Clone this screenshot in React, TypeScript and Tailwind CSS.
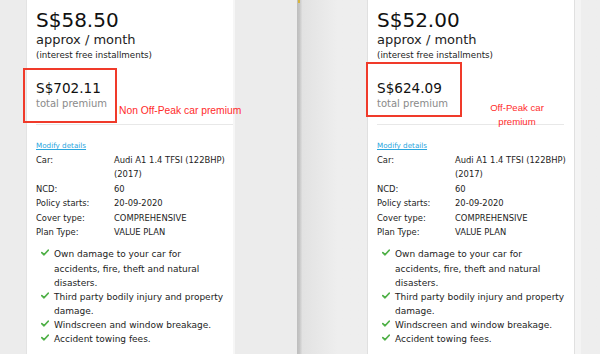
import React from 'react';

interface Quote {
  monthly: string;
  total: string;
  lineRight: string;
}

const details: [string, string][] = [
  ['Car:', 'Audi A1 1.4 TFSI (122BHP) (2017)'],
  ['NCD:', '60'],
  ['Policy starts:', '20-09-2020'],
  ['Cover type:', 'COMPREHENSIVE'],
  ['Plan Type:', 'VALUE PLAN'],
];

const benefits = [
  'Own damage to your car for accidents, fire, theft and natural disasters.',
  'Third party bodily injury and property damage.',
  'Windscreen and window breakage.',
  'Accident towing fees.',
];

function Check() {
  return (
    <svg className="w-[8px] h-[7px] mt-[2px] shrink-0" viewBox="0 0 10 8" fill="none">
      <path d="M1 4.2 L3.8 6.8 L9 1.2" stroke="#4fb047" strokeWidth={2.2} strokeLinecap="round" strokeLinejoin="round" />
    </svg>
  );
}

function QuoteCard({ quote }: { quote: Quote }) {
  return (
    <div className="h-full bg-white px-[9px] text-[#1c1c1c]">
      {/* Price */}
      <div className="pt-[8px] text-[20px] leading-[24px] text-[#111]">{quote.monthly}</div>
      <div className="text-[13px] leading-[16px]">approx / month</div>
      <div className="mt-[1px] text-[8.7px] leading-[12px]">(interest free installments)</div>

      <div className="mt-[19px] text-[13.6px] leading-[16px] text-[#111]">{quote.total}</div>
      <div className="mt-[1px] text-[10px] leading-[13px] text-[#8a8a8a]">total premium</div>

      <div className={`mt-[14px] border-t border-[#e8e8e8] ${quote.lineRight}`} />

      {/* Details */}
      <a className="block mt-[16px] text-[7.2px] leading-[10px] text-[#2ba6de] underline">Modify details</a>
      <div className="mt-[2px] text-[8.4px] leading-[14.4px]">
        {details.map(([label, value]) => (
          <div key={label} className="flex">
            <div className="w-[78px] shrink-0">{label}</div>
            <div className="w-[116px] shrink-0">{value}</div>
          </div>
        ))}
      </div>

      {/* Benefits */}
      <ul className="mt-[8px] pl-[5px] text-[9px] leading-[14.1px]">
        {benefits.map((b) => (
          <li key={b} className="flex gap-[5px]">
            <Check />
            <span className="w-[170px]">{b}</span>
          </li>
        ))}
      </ul>
    </div>
  );
}

export default function App() {
  return (
    <div className="relative w-[600px] h-[354px] flex overflow-hidden bg-[#ececec] font-['DejaVu_Sans',sans-serif]">
      {/* Left screenshot */}
      <div className="w-[297px] h-full flex shrink-0 pl-[26px]">
        <div className="w-[207px] h-full border-l border-[#e3e3e3]">
          <QuoteCard quote={{ monthly: 'S$58.50', total: 'S$702.11', lineRight: '-mr-[9px]' }} />
        </div>
        <div className="w-[2px] h-full bg-[#f6f6f6]" />
      </div>

      {/* Divider */}
      <div className="relative w-[5px] h-full shrink-0 bg-gradient-to-r from-[#bdbdbd] via-[#c6c6c6] to-[#dedede]">
        <div className="absolute top-0 left-[1px] w-[2px] h-[3px] bg-[#d8b53c]" />
      </div>

      {/* Right screenshot */}
      <div className="flex-1 h-full flex pl-[65px] bg-gradient-to-r from-[#e2e2e2] via-[#eeeeee] via-[12%] to-[#eeeeee]">
        <div className="w-[208px] h-full border-x border-[#e0e0e0]">
          <QuoteCard quote={{ monthly: 'S$52.00', total: 'S$624.09', lineRight: 'mr-[1px]' }} />
        </div>
        <div className="w-[6px] h-full bg-[#f4f4f4]" />
      </div>

      {/* Annotations */}
      <div className="absolute left-[23px] top-[68px] w-[94px] h-[55px] border-[2.5px] border-[#f03a2a]" />
      <div className="absolute left-[119px] top-[105px] text-[10.3px] leading-[12px] text-[#ff2b2b] font-['Liberation_Sans',Arial,sans-serif] whitespace-nowrap">
        Non Off-Peak car premium
      </div>

      <div className="absolute left-[366px] top-[62px] w-[96px] h-[55px] border-[2.5px] border-[#f03a2a]" />
      <div className="absolute left-[487px] top-[101px] w-[60px] text-center text-[9.6px] leading-[14px] text-[#ff2b2b] font-['Liberation_Sans',Arial,sans-serif]">
        Off-Peak car
        <br />
        premium
      </div>
    </div>
  );
}
